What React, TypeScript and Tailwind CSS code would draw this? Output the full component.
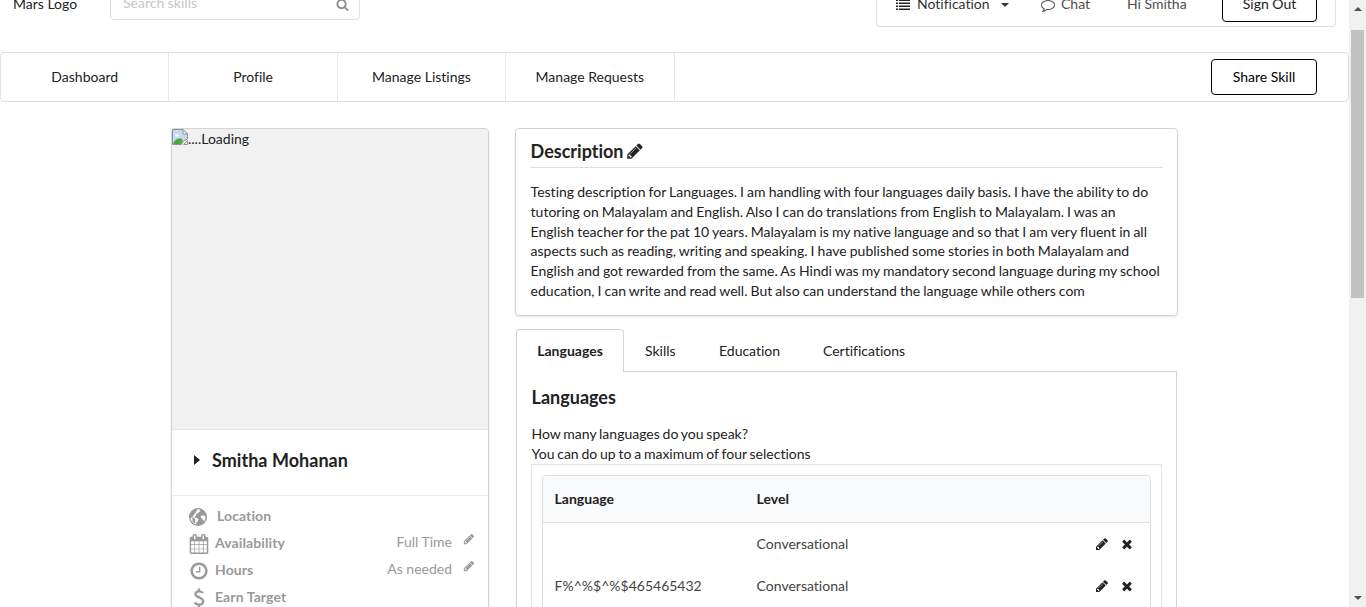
import React from "react";

type IconProps = { className?: string };

const paths = {
  pencil:
    "M491 1536l91-91-235-235-91 91v107h128v128h107zm523-928q0-22-22-22-10 0-17 7l-542 542q-7 7-7 17 0 22 22 22 10 0 17-7l542-542q7-7 7-17zm-54-192l416 416-832 832h-416v-416zm683 96q0 53-37 90l-166 166-416-416 166-165q36-38 90-38 53 0 91 38l235 234q37 39 37 91z",
  calendar:
    "M192 1664h288v-288h-288v288zm352 0h320v-288h-320v288zm-352-352h288v-320h-288v320zm352 0h320v-320h-320v320zm-352-384h288v-288h-288v288zm736 736h320v-288h-320v288zm-384-736h320v-288h-320v288zm768 736h288v-288h-288v288zm-384-352h320v-320h-320v320zm-352-864v-288q0-13-9.500-22.500t-22.500-9.500h-64q-13 0-22.500 9.500t-9.500 22.500v288q0 13 9.500 22.500t22.500 9.500h64q13 0 22.500-9.500t9.500-22.500zm736 864h288v-320h-288v320zm-384-384h320v-288h-320v288zm384 0h288v-288h-288v288zm32-480v-288q0-13-9.500-22.500t-22.500-9.500h-64q-13 0-22.500 9.500t-9.500 22.500v288q0 13 9.500 22.500t22.500 9.500h64q13 0 22.500-9.500t9.500-22.500zm384-64v1280q0 52-38 90t-90 38h-1408q-52 0-90-38t-38-90v-1280q0-52 38-90t90-38h128v-96q0-66 47-113t113-47h64q66 0 113 47t47 113v96h384v-96q0-66 47-113t113-47h64q66 0 113 47t47 113v96h128q52 0 90 38t38 90z",
  clock:
    "M1024 544v448q0 14-9 23t-23 9h-320q-14 0-23-9t-9-23v-64q0-14 9-23t23-9h224v-352q0-14 9-23t23-9h64q14 0 23 9t9 23zm416 352q0-148-73-273t-198-198-273-73-273 73-198 198-73 273 73 273 198 198 273 73 273-73 198-198 73-273zm224 0q0 209-103 385.500t-279.500 279.500-385.500 103-385.500-103-279.500-279.500-103-385.500 103-385.500 279.500-279.500 385.500-103 385.500 103 279.500 279.500 103 385.500z",
  search:
    "M1216 832q0-185-131.500-316.500t-316.500-131.500-316.500 131.500-131.500 316.500 131.500 316.500 316.500 131.500 316.500-131.500 131.500-316.500zm512 832q0 52-38 90t-90 38q-54 0-90-38l-343-342q-179 124-399 124-143 0-273.500-55.500t-225-150-150-225-55.500-273.500 55.500-273.500 150-225 225-150 273.500-55.500 273.500 55.500 225 150 150 225 55.500 273.500q0 220-124 399l343 343q37 37 37 90z",
  times:
    "M1490 1322q0 40-28 68l-136 136q-28 28-68 28t-68-28l-294-294-294 294q-28 28-68 28t-68-28l-136-136q-28-28-28-68t28-68l294-294-294-294q-28-28-28-68t28-68l136-136q28-28 68-28t68 28l294 294 294-294q28-28 68-28t68 28l136 136q28 28 28 68t-28 68l-294 294 294 294q28 28 28 68z",
  comment:
    "M896 384q-204 0-381.500 69.500t-282 187.500-104.500 255q0 112 71.500 213.500t201.500 175.500l87 50-27 96q-24 91-70 172 152-63 275-171l43-38 57 6q69 8 130 8 204 0 381.500-69.500t282-187.500 104.500-255-104.500-255-282-187.500-381.500-69.500zm896 512q0 174-120 321.500t-326 233-450 85.500q-70 0-145-8-198 175-460 242-49 14-114 22h-5q-15 0-27-10.500t-16-27.500v-1q-3-4-.5-12t2-10 4.500-9.500l6-9 7-8.500 8-9q7-8 31-34.500t34.500-38 31-39.500 32.500-51 27-59 26-76q-157-89-247.500-220t-90.500-281q0-174 120-321.500t326-233 450-85.500 450 85.500 326 233 120 321.500z",
  list:
    "M0 1344h256v192h-256zM0 960h256v192h-256zM0 576h256v192h-256zM0 192h256v192h-256zM384 1344h1408v192h-1408zM384 960h1408v192h-1408zM384 576h1408v192h-1408zM384 192h1408v192h-1408z",
};

function Icon({ name, className = "" }: { name: keyof typeof paths; className?: string }) {
  return (
    <svg viewBox="0 0 1792 1792" fill="currentColor" className={`shrink-0 ${className}`}>
      <path d={paths[name]} />
    </svg>
  );
}

function Globe({ className = "" }: IconProps) {
  return (
    <svg viewBox="0 0 18 18" className={`shrink-0 ${className}`}>
      <circle cx="9" cy="9" r="9" fill="currentColor" />
      <path
        fill="#fff"
        d="M8.200 1.500c1.300-.3 2.500-.1 3.500.4l-1.500.9.900 1-1.700.6-1 1.300-1.600.4.300 1.600-1.300.3.300 1.400 1.600.5 1.900 1.100-.7 2-1.400 1.200-.3 2.200C3.900 15.500 1.800 12.900 1.400 10l1.900-.5.6-1.300 1-1.700 1.400-1.500 1-1.800z"
      />
      <path fill="#fff" d="M11.800 8.300l1.700-1 1.800.4 1.100 1.200c0 1.500-.4 2.900-1.200 4.100l-1.200-.5-.6-1.700-1.500-.9z" />
      <path fill="currentColor" d="M3.300 9.200l2 .6 1.200 2.100-.6 1.800.5 2-2.800-2z" />
    </svg>
  );
}

function Dollar({ className = "" }: IconProps) {
  return (
    <svg
      viewBox="0 0 12 20"
      fill="none"
      stroke="currentColor"
      strokeWidth="2.300"
      className={`shrink-0 ${className}`}
    >
      <path d="M6 .5v3M6 16.500v3M10 4.800C8.600 3.700 7.400 3.300 6 3.300c-2.200 0-3.600 1.200-3.600 2.900C2.400 10 10.200 8.800 10.200 13.300c0 2-1.700 3.300-4 3.300-1.800 0-3.300-.6-4.700-1.900" />
    </svg>
  );
}

function BrokenImage() {
  return (
    <svg viewBox="0 0 16 16" className="size-4 shrink-0">
      <path d="M.5.500h10.500l4.500 4.500v5l-4 2-2 3.500h-9z" fill="#c6d9f7" stroke="#8f8f8f" />
      <path d="M11 .5v4.500h4.500z" fill="#fff" stroke="#8f8f8f" />
      <path d="M3 6.500c0-1.600 2-2 2.600-.8 1.400-.3 1.900 1.500.8 1.800H3.500z" fill="#fff" />
      <path d="M1 15c1-4 4-6 8-5.500l2 2-2 3.500z" fill="#4ba838" />
      <path d="M15.500 11.500v4h-4z" fill="#fff" stroke="#8f8f8f" />
    </svg>
  );
}

function Header() {
  return (
    <header className="-mt-[18px] flex h-[45px] shrink-0 items-center pr-[13px] pl-[13px]">
      <span className="mb-[2px] w-[97px]">Mars Logo</span>
      <div className="flex h-[31px] w-[250px] items-center justify-between rounded-[4px] border border-[#dededf] pr-2.5 pl-3">
        <span className="mb-[3px] text-[#c7c7c7]">Search skills</span>
        <Icon name="search" className="size-[13px] text-[#8f8f8f]" />
      </div>
      <div className="ml-auto flex h-[45px] w-[460px] items-center rounded-[4px] border border-[#dededf] pl-[19px] text-[#4c4c4c]">
        <Icon name="list" className="mr-[7px] size-3.5 text-[#222]" />
        <span className="mb-[2px] w-[84px] text-[#333]">Notification</span>
        <span className="border-x-4 border-t-4 border-x-transparent border-t-[#333]" />
        <Icon name="comment" className="mr-[6px] ml-[32px] size-3.5" />
        <span className="mb-[2px] w-[66px]">Chat</span>
        <span className="mb-[2px] w-[95px]">Hi Smitha</span>
        <button className="flex h-[35px] w-[95px] items-center justify-center rounded-[4px] border border-black pb-[2px] text-[#222]">
          Sign Out
        </button>
      </div>
    </header>
  );
}

function NavBar() {
  return (
    <nav className="mt-[25px] flex h-[50px] shrink-0 items-center rounded-[4px] border border-[#dededf]">
      {["Dashboard", "Profile", "Manage Listings", "Manage Requests"].map((label) => (
        <a
          key={label}
          className="flex h-full w-[168.400px] items-center justify-center border-r border-[#e8e8e9]"
        >
          {label}
        </a>
      ))}
      <button className="mr-[31px] ml-auto flex h-9 w-[106px] items-center justify-center rounded-[4px] border border-black text-black">
        Share Skill
      </button>
    </nav>
  );
}

function ProfileCard() {
  return (
    <aside className="h-[600px] w-[318px] rounded-[4px] border border-[#d4d4d5] shadow-[0_1px_2px_rgba(34,36,38,0.12)]">
      <div className="flex h-[301px] items-start rounded-t-[3px] border-b border-[#e4e4e4] bg-[#f1f1f1]">
        <BrokenImage />
        <span>....Loading</span>
      </div>
      <div className="flex h-[66px] items-center border-b border-[#ececec] pb-[6px] pl-[22px]">
        <span className="mr-[12px] border-y-[5px] border-l-[6px] border-y-transparent border-l-[#222]" />
        <h2 className="text-[18px] font-bold tracking-[0.03px]">Smitha Mohanan</h2>
      </div>
      <div className="pt-[6px] pr-[13px] pl-[17px] text-[#999]">
        <div className="flex h-[27px] items-center">
          <Globe className="mt-[3px] mr-[10px] size-[18px]" />
          <span className="font-bold tracking-[0.1px]">Location</span>
        </div>
        <div className="flex h-[27px] items-center">
          <Icon name="calendar" className="mt-[3px] mr-[6px] size-5" />
          <span className="font-bold tracking-[0.1px]">Availability</span>
          <span className="mr-[11px] mb-px ml-auto">Full Time</span>
          <Icon name="pencil" className="mb-[7px] size-3" />
        </div>
        <div className="flex h-[27px] items-center">
          <Icon name="clock" className="mt-[3px] mr-[6px] size-5" />
          <span className="font-bold tracking-[0.1px]">Hours</span>
          <span className="mr-[11px] mb-px ml-auto">As needed</span>
          <Icon name="pencil" className="mb-[7px] size-3" />
        </div>
        <div className="flex h-[27px] items-center">
          <Dollar className="mt-[3px] mr-[10px] ml-[4px] h-5 w-3" />
          <span className="font-bold tracking-[0.1px]">Earn Target</span>
        </div>
      </div>
    </aside>
  );
}

function Description() {
  return (
    <section className="h-[188px] rounded-[4px] border border-[#d4d4d5] px-[14px] shadow-[0_1px_2px_rgba(34,36,38,0.12)]">
      <h3 className="flex h-[39px] items-center border-b border-[#dedede] pt-[5px] pl-[0.600px] text-[18px] font-bold">
        Description
        <Icon name="pencil" className="ml-[2px] size-[18px]" />
      </h3>
      <p className="mt-[14px] pl-[0.600px] leading-[19.800px] [word-spacing:-0.5px] whitespace-nowrap">
        Testing description for Languages. I am handling with four languages daily basis. I have the ability to do
        <br />
        tutoring on Malayalam and English. Also I can do translations from English to Malayalam. I was an
        <br />
        English teacher for the pat 10 years. Malayalam is my native language and so that I am very fluent in all
        <br />
        aspects such as reading, writing and speaking. I have published some stories in both Malayalam and
        <br />
        English and got rewarded from the same. As Hindi was my mandatory second language during my school
        <br />
        education, I can write and read well. But also can understand the language while others com
      </p>
    </section>
  );
}

function Row({ language, level }: { language: string; level: string }) {
  return (
    <div className="flex h-[42px] items-center pr-[16px] pl-[11.600px] text-[#444]">
      <span className="w-[202px]">{language}</span>
      <span>{level}</span>
      <Icon name="pencil" className="mr-[11px] ml-auto size-3.5 text-[#222]" />
      <Icon name="times" className="size-3.5 text-[#222]" />
    </div>
  );
}

function LanguagePanel() {
  return (
    <section className="mt-[13px] ml-px w-[661px]">
      <div className="flex h-[43px]">
        <div className="flex w-[108px] items-center justify-center rounded-t-[4px] border-x border-t border-[#d4d4d5] font-bold">
          Languages
        </div>
        <div className="flex grow items-center border-b border-[#d4d4d5] pt-[2px] pl-[21px]">
          <span className="w-[74px]">Skills</span>
          <span className="w-[104px]">Education</span>
          <span>Certifications</span>
        </div>
      </div>
      <div className="h-[400px] border-x border-[#d4d4d5] px-[14px] pt-[12px]">
        <h3 className="h-[40px] pl-[0.600px] text-[18px] leading-[26px] font-bold">Languages</h3>
        <p className="pl-[0.500px] [word-spacing:-0.8px]">How many languages do you speak?</p>
        <p className="pl-[0.500px] [word-spacing:-0.8px]">You can do up to a maximum of four selections</p>
        <div className="h-[300px] border border-[#e4e4e5] p-[10px]">
          <div className="h-[280px] rounded-[4px] border border-[#dededf]">
            <div className="flex h-[47px] items-center rounded-t-[4px] border-b border-[#e1e2e3] bg-[#f9fafb] pl-[11.600px] font-bold">
              <span className="w-[202px]">Language</span>
              <span>Level</span>
            </div>
            <Row language="" level="Conversational" />
            <Row language="F%^%$^%$465465432" level="Conversational" />
          </div>
        </div>
      </div>
    </section>
  );
}

function Scrollbar() {
  return (
    <div className="flex h-full w-[17px] shrink-0 flex-col items-center bg-[#f0f0f0]">
      <span className="mt-[7px] border-x-4 border-b-4 border-x-transparent border-b-[#505050]" />
      <span className="mt-[19px] h-[268px] w-[13px] bg-[#c1c1c1]" />
      <span className="mt-auto mb-[7px] border-x-4 border-t-4 border-x-transparent border-t-[#505050]" />
    </div>
  );
}

export default function App() {
  return (
    <div className="flex h-[607px] w-[1366px] overflow-hidden bg-white font-[Lato,sans-serif] text-[14px] leading-[20px] text-[#222] [font-variant-ligatures:none]">
      <div className="flex h-full w-[1349px] flex-col overflow-hidden">
        <Header />
        <NavBar />
        <main className="mt-[26px] flex pl-[171px]">
          <ProfileCard />
          <div className="ml-[26px] w-[663px]">
            <Description />
            <LanguagePanel />
          </div>
        </main>
      </div>
      <Scrollbar />
    </div>
  );
}
